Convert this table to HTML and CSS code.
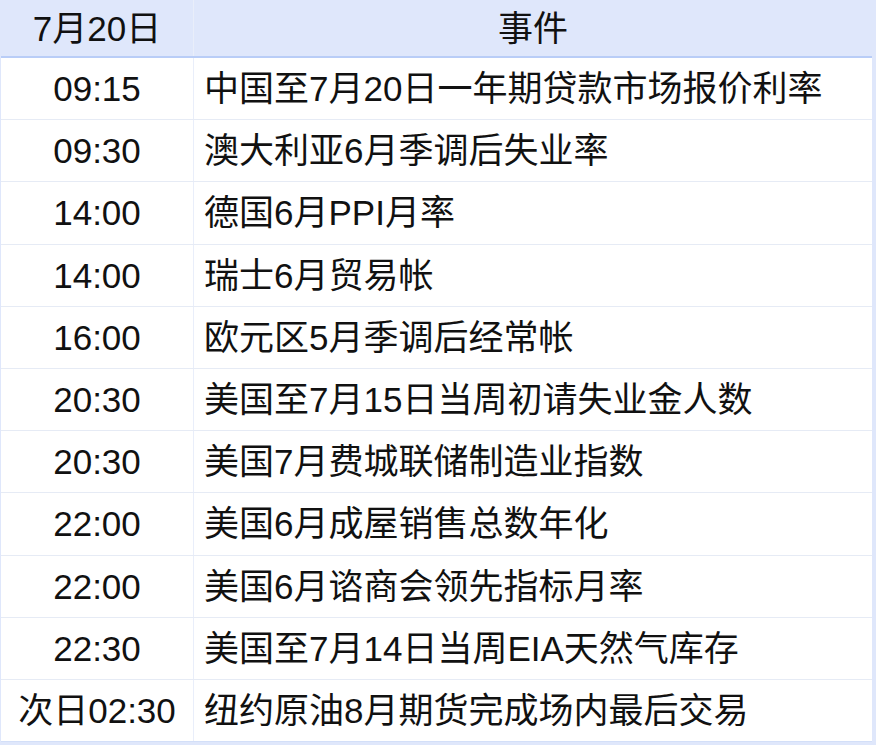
FILE: index.html
```html
<!DOCTYPE html>
<html lang="zh">
<head>
<meta charset="utf-8">
<link rel="stylesheet" href="styles.css">
</head>
<body>
<div class="page">
<table class="events">
<thead>
<tr><th class="c-time">7月20日</th><th class="c-event">事件</th></tr>
</thead>
<tbody>
<tr><td class="c-time">09:15</td><td class="c-event">中国至7月20日一年期贷款市场报价利率</td></tr>
<tr><td class="c-time">09:30</td><td class="c-event">澳大利亚6月季调后失业率</td></tr>
<tr><td class="c-time">14:00</td><td class="c-event">德国6月PPI月率</td></tr>
<tr><td class="c-time">14:00</td><td class="c-event">瑞士6月贸易帐</td></tr>
<tr><td class="c-time">16:00</td><td class="c-event">欧元区5月季调后经常帐</td></tr>
<tr><td class="c-time">20:30</td><td class="c-event">美国至7月15日当周初请失业金人数</td></tr>
<tr><td class="c-time">20:30</td><td class="c-event">美国7月费城联储制造业指数</td></tr>
<tr><td class="c-time">22:00</td><td class="c-event">美国6月成屋销售总数年化</td></tr>
<tr><td class="c-time">22:00</td><td class="c-event">美国6月谘商会领先指标月率</td></tr>
<tr><td class="c-time">22:30</td><td class="c-event">美国至7月14日当周EIA天然气库存</td></tr>
<tr><td class="c-time">次日02:30</td><td class="c-event">纽约原油8月期货完成场内最后交易</td></tr>
</tbody>
</table>
</div>
</body>
</html>
```
FILE: styles.css
```css
html, body {
  margin: 0;
  padding: 0;
  background: #dfe7fb;
}
.page {
  width: 876px;
  height: 745px;
  overflow: hidden;
  background: #dfe7fb;
  padding-left: 1px;
  box-sizing: border-box;
}
.events {
  border-collapse: collapse;
  width: 871px;
  font-family: "Liberation Sans", "Noto Sans CJK SC", sans-serif;
  font-size: 35px;
  color: #111;
  background: #fff;
  table-layout: fixed;
}
.events th {
  font-weight: normal;
  background: #dfe7fb;
  height: 56px;
  padding: 0;
  border-bottom: 2px solid #b9cdf7;
  text-align: center;
  line-height: 1;
}
.events th.c-time {
  width: 192px;
  border-right: 1px solid #e9eefa;
}
.events td {
  height: 61.2px;
  padding: 0;
  border-bottom: 1px solid #e6ebf5;
  line-height: 1;
  vertical-align: middle;
}
.events td.c-time {
  text-align: center;
  border-right: 1px solid #e9eefa;
}
.events td.c-event {
  text-align: left;
  padding-left: 10px;
}
.events tbody tr:last-child td {
  border-bottom: 1px solid #d3dff8;
}
```
